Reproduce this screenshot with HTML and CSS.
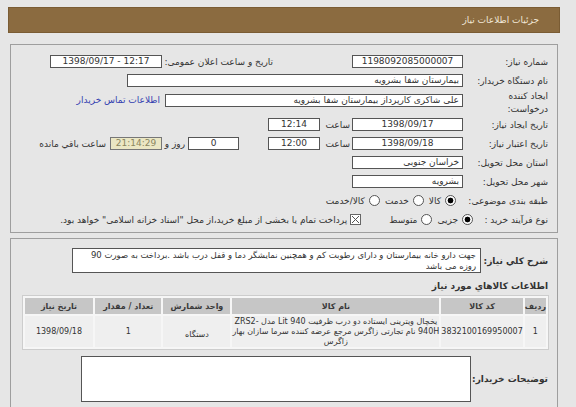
FILE: index.html
```html
<!DOCTYPE html>
<html lang="fa" dir="rtl">
<head>
<meta charset="utf-8">
<title>جزئیات اطلاعات نیاز</title>
<link rel="stylesheet" href="styles.css">
</head>
<body>
<div class="page">
  <div class="titlebar">جزئیات اطلاعات نیاز</div>

  <div class="panel p1">
    <div class="row">
      <div class="lbl">شماره نیاز:</div>
      <div class="box w111 c">1198092085000007</div>
      <div class="lbl lbl-pub">تاریخ و ساعت اعلان عمومی:</div>
      <div class="box w112 c ltr">1398/09/17 - 12:17</div>
    </div>

    <div class="row">
      <div class="lbl">نام دستگاه خریدار:</div>
      <div class="box w336">بیمارستان شفا بشرویه</div>
    </div>

    <div class="row row-tall">
      <div class="lbl lbl-2l">ایجاد کننده<br>درخواست:</div>
      <div class="box w298">علی شاکری کارپرداز بیمارستان شفا بشرویه</div>
      <a class="link" href="#">اطلاعات تماس خریدار</a>
    </div>

    <div class="row">
      <div class="lbl">تاریخ ایجاد نیاز:</div>
      <div class="box w111 c">1398/09/17</div>
      <div class="lbl-time">ساعت</div>
      <div class="box w52 c">12:14</div>
    </div>

    <div class="row">
      <div class="lbl">تاریخ اعتبار نیاز:</div>
      <div class="box w111 c">1398/09/18</div>
      <div class="lbl-time">ساعت</div>
      <div class="box w52 c">12:00</div>
      <div class="box w51 c days">0</div>
      <div class="lbl-day">روز و</div>
      <div class="box w52 c remain">21:14:29</div>
      <div class="lbl-rem">ساعت باقي مانده</div>
    </div>

    <div class="row">
      <div class="lbl">استان محل تحویل:</div>
      <div class="box w111">خراسان جنوبی</div>
    </div>

    <div class="row">
      <div class="lbl">شهر محل تحویل:</div>
      <div class="box w111">بشرویه</div>
    </div>

    <div class="row">
      <div class="lbl lbl-cat">طبقه بندی موضوعی:</div>
      <div class="opt"><span class="radio on"></span><span>کالا</span></div>
      <div class="opt"><span class="radio"></span><span>خدمت</span></div>
      <div class="opt"><span class="radio"></span><span>کالا/خدمت</span></div>
    </div>

    <div class="row">
      <div class="lbl lbl-proc">نوع فرآیند خرید :</div>
      <div class="opt"><span class="radio on"></span><span>جزیی</span></div>
      <div class="opt"><span class="radio"></span><span>متوسط</span></div>
      <div class="opt opt-chk">
        <svg class="chk" width="11" height="11" viewBox="0 0 11 11"><rect x="0.5" y="0.5" width="10" height="10" fill="#fff" stroke="#666"/><path d="M2 2 L9 9 M9 2 L2 9" stroke="#555" stroke-width="1"/></svg>
        <span>پرداخت تمام یا بخشی از مبلغ خرید،از محل "اسناد خزانه اسلامی" خواهد بود.</span>
      </div>
    </div>
  </div>

  <div class="panel p2">
    <div class="desc-row">
      <div class="lbl-b lbl-desc">شرح کلي نياز:</div>
      <div class="box desc">
        <div>جهت دارو خانه بیمارستان و دارای رطوبت کم و همچنین نمایشگر دما و قفل درب باشد .برداخت به صورت 90</div>
        <div>روزه می باشد</div>
      </div>
    </div>

    <div class="lbl-b heading">اطلاعات کالاهاي مورد نياز</div>

    <table class="items">
      <thead>
        <tr>
          <th class="c-idx">ردیف</th>
          <th class="c-code">کد کالا</th>
          <th class="c-name">نام کالا</th>
          <th class="c-unit">واحد شمارش</th>
          <th class="c-qty">تعداد / مقدار</th>
          <th class="c-date">تاریخ نیاز</th>
        </tr>
      </thead>
      <tbody>
        <tr>
          <td>1</td>
          <td>3832100169950007</td>
          <td class="name">
            <div>یخچال ویترینی ایستاده دو درب ظرفیت 940 Lit مدل <span dir="ltr">ZRS2-</span></div>
            <div>940H نام تجارتی زاگرس مرجع عرضه کننده سرما سازان بهار</div>
            <div>زاگرس</div>
          </td>
          <td class="unit">دستگاه</td>
          <td>1</td>
          <td>1398/09/18</td>
        </tr>
      </tbody>
    </table>

    <div class="note-row">
      <div class="lbl-b lbl-note">توضیحات خریدار:</div>
      <div class="box note"></div>
    </div>
  </div>
</div>
</body>
</html>
```

FILE: styles.css
```css
* { box-sizing: border-box; }
html, body { margin: 0; padding: 0; }
body {
  width: 576px;
  height: 407px;
  overflow: hidden;
  background: #e6e6e6;
  font-family: "DejaVu Sans", sans-serif;
  font-size: 9px;
  color: #333;
}
.page {
  direction: rtl;
  padding: 7px 16px 0 8px;
}
.titlebar {
  height: 26px;
  background: #8b6b40;
  border: 1px solid #7a5c34;
  color: #f1e8d8;
  line-height: 24px;
  padding-right: 20px;
  font-size: 9px;
}
.panel {
  margin: 11px 2px 0;
  border: 1px solid #9e9e9e;
  padding: 7px 9px 3px 9px;
}
.p2 {
  margin-top: 5px;
  padding-top: 9px;
  height: 170px;
}
.row {
  display: flex;
  align-items: center;
  height: 19px;
  white-space: nowrap;
}
.row-tall {
  height: 25px;
  align-items: flex-start;
}
.lbl { width: 85px; flex: none; }
.lbl-2l { line-height: 13px; }
.row-tall .box { margin-top: 4px; }
.box {
  flex: none;
  height: 13px;
  border: 1px solid #555;
  background: #fff;
  line-height: 11px;
  padding: 0 3px;
  white-space: nowrap;
  overflow: hidden;
  font-size: 9px;
}
.c { text-align: center; }
.ltr { direction: ltr; }
.w111 { width: 111px; }
.w112 { width: 112px; }
.w336 { width: 336px; }
.w298 { width: 298px; }
.w52 { width: 52px; }
.w51 { width: 51px; }
.lbl-pub { width: 111px; margin-right: 79px; }
.link {
  color: #3340b0;
  text-decoration: none;
  margin-right: 5px;
  margin-top: 4px;
  line-height: 12px;
}
.lbl-time { width: 32px; padding-right: 2px; }
.days { margin-right: 29px; }
.lbl-day { width: 26px; padding-right: 3px; }
.remain {
  background: #ebe7c4;
  color: #8a8660;
  border-color: #777;
}
.lbl-rem { padding-right: 4px; }
.lbl-cat { width: 92px; }
.lbl-proc { width: 75px; }
.opt {
  display: flex;
  align-items: center;
  gap: 4px;
  margin-left: 5px;
}
.radio {
  display: inline-block;
  width: 11px;
  height: 11px;
  border-radius: 50%;
  border: 1px solid #555;
  background: #fff;
  flex: none;
}
.radio.on {
  background: radial-gradient(circle, #000 0 2.6px, #fff 3.2px);
}
.chk { flex: none; }
.opt-chk { margin-right: 23px; gap: 3px; }

.lbl-b {
  font-weight: bold;
  font-size: 9px;
  color: #333;
  white-space: nowrap;
}
.desc-row {
  display: flex;
  align-items: center;
  height: 25px;
}
.lbl-desc { width: 67px; flex: none; }
.desc {
  width: 409px;
  height: 25px;
  padding: 1px 4px;
  line-height: 11px;
  font-size: 8.5px;
}
.heading {
  margin-top: 6px;
  height: 16px;
  line-height: 14px;
}
.items {
  width: 527px;
  border-collapse: separate;
  border-spacing: 2px;
  background: #f6f6f6;
  border: 1px solid #cdcdcd;
  margin-top: 0;
  margin-right: -1px;
  font-size: 8px;
}
.items th, .items td {
  text-align: center;
  padding: 0;
  white-space: nowrap;
}
.items th {
  background: #c6c6c6;
  height: 16px;
  font-weight: bold;
  color: #3a3a3a;
}
.items td {
  background: #efefef;
  height: 31px;
  color: #333;
  line-height: 10px;
}
.c-idx { width: 21px; }
.c-code { width: 74px; }
.c-name { width: 204px; }
.c-unit { width: 71px; }
.c-qty { width: 71px; }
.c-date { width: 74px; }
.items td.unit { padding-top: 6px; }
.note-row {
  display: flex;
  align-items: center;
  margin-top: 6px;
}
.lbl-note { width: 77px; flex: none; }
.note {
  width: 390px;
  height: 46px;
}
```
